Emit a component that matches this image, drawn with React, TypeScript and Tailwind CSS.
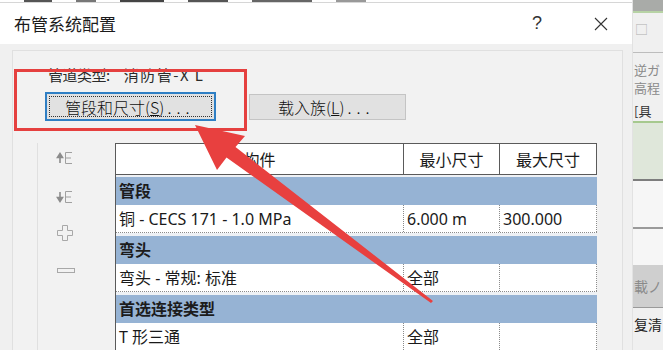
import React from "react";

const groups = [
  { title: "管段", name: "铜 - CECS 171 - 1.0 MPa", min: "6.000 m", max: "300.000" },
  { title: "弯头", name: "弯头 - 常规: 标准", min: "全部", max: "" },
  { title: "首选连接类型", name: "T 形三通", min: "全部", max: "" },
];

function MoveIcon({ down }: { down?: boolean }) {
  return (
    <svg width="20" height="16" viewBox="0 0 20 16" fill="none">
      {down ? (
        <path d="M4 3v7M1.5 8.5L4 12.5l2.5-4z" stroke="#8c8c8c" strokeWidth="1.6" fill="#8c8c8c" />
      ) : (
        <path d="M4 13V6M1.5 7.5L4 3.5l2.5 4z" stroke="#8c8c8c" strokeWidth="1.6" fill="#8c8c8c" />
      )}
      <path d="M16 2.5H9.5v11H16M9.5 8H15" stroke="#a0a0a0" strokeWidth="1" />
    </svg>
  );
}

function PlusIcon() {
  return (
    <svg width="18" height="18" viewBox="0 0 18 18" fill="none">
      <path d="M6.5 1.5h5v5h5v5h-5v5h-5v-5h-5v-5h5z" stroke="#a8a8a8" strokeWidth="1" />
    </svg>
  );
}

function MinusIcon() {
  return (
    <svg width="20" height="8" viewBox="0 0 20 8" fill="none">
      <rect x="1.5" y="1.5" width="17" height="4" stroke="#a8a8a8" strokeWidth="1" />
    </svg>
  );
}

export default function App() {
  return (
    <div className="relative w-[663px] h-[357px] overflow-hidden bg-white flex font-['Noto_Sans','Noto_Sans_CJK_SC',sans-serif]">
      {/* dialog */}
      <div className="w-[632px] h-[350px] flex flex-col bg-white">
        <div className="h-[3px] shrink-0 overflow-hidden flex gap-6 pl-[24px] border-b border-[#d6d6d6]">
          <div className="w-[28px] h-[2px] bg-[#555]" />
          <div className="w-[20px] h-[2px] bg-[#777]" />
          <div className="w-[44px] h-[2px] bg-[#444]" />
          <div className="w-[40px] h-[2px] bg-[#555]" />
          <div className="w-[60px] h-[2px] bg-[#666]" />
          <div className="w-[30px] h-[2px] bg-[#999]" />
        </div>
        <div className="h-[41px] shrink-0 flex items-center pl-[14px] pr-[24px]">
          <span className="text-[17px] text-[#1b1b1b] font-['Noto_Sans_CJK_SC',sans-serif]">布管系统配置</span>
          <span className="ml-auto mr-[52px] text-[18px] text-[#333] font-['Liberation_Sans',sans-serif] font-light">?</span>
          <svg width="14" height="14" viewBox="0 0 14 14">
            <path d="M1 1l12 12M13 1L1 13" stroke="#333" strokeWidth="1.1" />
          </svg>
        </div>
        <div className="flex-1 min-h-0 overflow-hidden bg-[#f0f0f0] pl-[12px] pt-[6px] flex">
          <div className="w-[611px] shrink-0 border-l border-t border-r border-[#e0e0e0] bg-[#f2f2f2] flex flex-col">
            <div className="pl-[35px] mt-[14px] shrink-0 flex text-[15px] leading-[20px] text-[#2a2a2a] font-['Noto_Sans_CJK_SC',sans-serif]">
              <span className="tracking-[-0.5px]">管道类型:</span>
              <span className="ml-[14px] tracking-[1.5px]">消防管-X&nbsp;L</span>
            </div>
            <div className="flex shrink-0 items-center pl-[32px] mt-[7px]">
              <div className="w-[171px] h-[29px] border-2 border-[#2f7fc4] bg-[#e1e1e1] p-[2px]">
                <div className="h-full border border-dotted border-[#333] flex items-center pl-[15px] text-[16px] text-[#111] font-['Noto_Sans_CJK_SC',sans-serif] font-light">
                  管段和尺寸(<span className="underline">S</span>)<span className="tracking-[5px] ml-[3px]">...</span>
                </div>
              </div>
              <div className="ml-[33px] w-[157px] h-[26px] border border-[#c4c4c4] bg-[#e1e1e1] flex items-center pl-[28px] text-[16px] text-[#111] font-['Noto_Sans_CJK_SC',sans-serif] font-light">
                载入族(<span className="underline">L</span>)<span className="tracking-[5px] ml-[3px]">...</span>
              </div>
            </div>
            <div className="flex shrink-0 mt-[22px]">
              <div className="w-[78px] flex flex-col items-start pl-[18px] border-l border-[#e0e0e0] ml-[24px]">
                <div className="mt-[7px]"><MoveIcon /></div>
                <div className="mt-[23px]"><MoveIcon down /></div>
                <div className="mt-[19px]"><PlusIcon /></div>
                <div className="mt-[25px]"><MinusIcon /></div>
              </div>
              <div className="w-[482px] border-l border-[#5a5a5a] bg-white text-[16px] text-[#1a1a1a]">
                <div className="flex h-[32px] border border-l-0 border-[#5a5a5a] text-[16px] font-['Noto_Sans_CJK_SC',sans-serif]">
                  <div className="w-[288px] flex items-center justify-center border-r border-[#5a5a5a]">构件</div>
                  <div className="w-[96px] flex items-center justify-center border-r border-[#5a5a5a]">最小尺寸</div>
                  <div className="flex-1 flex items-center justify-center">最大尺寸</div>
                </div>
                <div className="bg-[#eef1f5] pt-[2px]">
                  {groups.map((g) => (
                    <div key={g.title} className="pb-[3px] bg-[#eef1f5]">
                      <div className="h-[28px] bg-[#96b3d4] flex items-center pl-[3px] font-bold text-[16px] text-[#1c1c1c]">
                        {g.title}
                      </div>
                      <div className="h-[28px] bg-white flex border-b border-dotted border-[#8a8a8a]">
                        <div className="w-[288px] flex items-center pl-[3px] border-r border-dotted border-[#8a8a8a] whitespace-nowrap">
                          {g.name}
                        </div>
                        <div className="w-[96px] flex items-center pl-[3px] border-r border-dotted border-[#8a8a8a]">
                          {g.min}
                        </div>
                        <div className="w-[97px] flex items-center pl-[3px] border-r border-dotted border-[#8a8a8a]">
                          {g.max}
                        </div>
                      </div>
                    </div>
                  ))}
                </div>
              </div>
            </div>
          </div>
        </div>
      </div>

      {/* background app strip */}
      <div className="w-[31px] h-[350px] flex flex-col overflow-hidden bg-[#f0f0f0] border-l border-[#e2e2e2] text-[13px] text-[#6c6c6c] font-['Noto_Sans_CJK_SC',sans-serif] whitespace-nowrap">
        <div className="h-[13px] shrink-0 bg-[#a9aba8] border-b-2 border-[#b7d3a5]" />
        <div className="h-[40px] shrink-0 border-b border-[#bdbdbd] pl-[2px] pt-[6px] text-[#b0b0b0]">□</div>
        <div className="pl-[1px] mt-[8px] leading-[18px] text-[#8a8a8a]">逆ガ</div>
        <div className="pl-[1px] leading-[18px] text-[#8a8a8a]">高程</div>
        <div className="pl-[1px] mt-[5px] leading-[18px] text-[#333] border-b-2 border-[#a6c98e] pb-[1px]">[具</div>
        <div className="h-[58px] shrink-0 bg-[#dfe7da] border-b-2 border-[#7d7d7d]" />
        <div className="h-[48px] shrink-0 bg-[#f6f6f6] border-b-2 border-[#9a9a9a]" />
        <div className="h-[36px] shrink-0 bg-[#f6f6f6]" />
        <div className="h-[42px] shrink-0 bg-[#cfcfcf] pl-[1px] flex items-center text-[14px] text-[#8a8a8a]">載ノ</div>
        <div className="flex-1 pl-[1px] pt-[6px] text-[14px] text-[#222] border-t border-[#9a9a9a]">复清</div>
      </div>

      {/* red annotation box */}
      <div className="absolute left-[14px] top-[69px] w-[233px] h-[62px] border-[3px] border-[#e5403f]" />

      {/* red annotation arrow */}
      <svg className="absolute left-0 top-0" width="663" height="357" viewBox="0 0 663 357">
        <polygon
          points="195,125 245,136 235.5,147 433,301 431,303 226.5,157.5 217,170"
          fill="#e8403f"
        />
      </svg>
    </div>
  );
}
